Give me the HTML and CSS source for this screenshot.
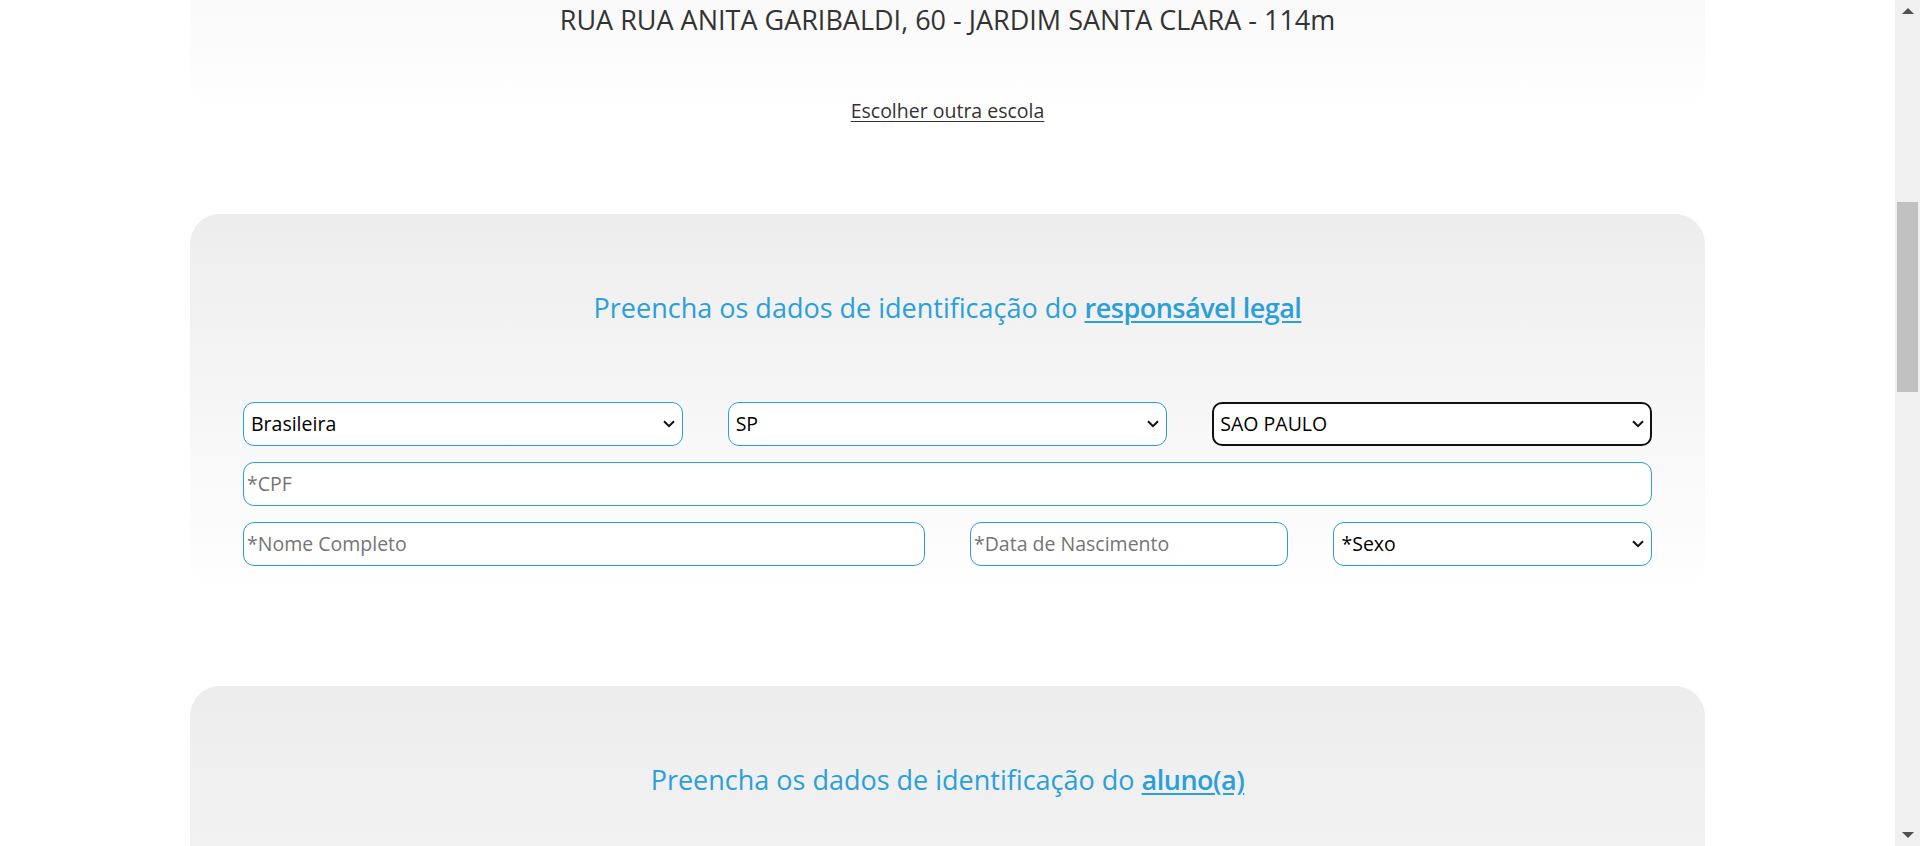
FILE: index.html
```html
<!DOCTYPE html>
<html lang="pt-BR">
<head>
<meta charset="utf-8">
<title>Matrícula</title>
<link rel="stylesheet" href="styles.css">
</head>
<body>
<div class="viewport">
  <section class="card school-card">
    <p class="address">RUA RUA ANITA GARIBALDI, 60 - JARDIM SANTA CLARA - 114m</p>
    <a class="change-link" href="#">Escolher outra escola</a>
  </section>

  <section class="card form-card">
    <h2 class="form-title">Preencha os dados de identificação do <a href="#">responsável legal</a></h2>
    <div class="grid">
      <div class="field span-4">
        <div class="control select">Brasileira</div>
        <svg class="chev" viewBox="0 0 12 8" width="12" height="8"><path d="M1 1.2 L6 6.2 L11 1.2" fill="none" stroke="#111" stroke-width="2"/></svg>
      </div>
      <div class="field span-4">
        <div class="control select">SP</div>
        <svg class="chev" viewBox="0 0 12 8" width="12" height="8"><path d="M1 1.2 L6 6.2 L11 1.2" fill="none" stroke="#111" stroke-width="2"/></svg>
      </div>
      <div class="field span-4">
        <div class="control select focused">SAO PAULO</div>
        <svg class="chev" viewBox="0 0 12 8" width="12" height="8"><path d="M1 1.2 L6 6.2 L11 1.2" fill="none" stroke="#111" stroke-width="2"/></svg>
      </div>
      <div class="field span-12">
        <div class="control input placeholder">*CPF</div>
      </div>
      <div class="field span-6">
        <div class="control input placeholder">*Nome Completo</div>
      </div>
      <div class="field span-3">
        <div class="control input placeholder">*Data de Nascimento</div>
      </div>
      <div class="field span-3">
        <div class="control select">*Sexo</div>
        <svg class="chev" viewBox="0 0 12 8" width="12" height="8"><path d="M1 1.2 L6 6.2 L11 1.2" fill="none" stroke="#111" stroke-width="2"/></svg>
      </div>
    </div>
  </section>

  <section class="card form-card student-card">
    <h2 class="form-title">Preencha os dados de identificação do <a href="#">aluno(a)</a></h2>
  </section>
</div>

<div class="scrollbar">
  <span class="arrow up"></span>
  <span class="thumb"></span>
  <span class="arrow down"></span>
</div>
</body>
</html>
```

FILE: styles.css
```css
html, body {
  margin: 0;
  padding: 0;
  height: 100%;
  overflow: hidden;
  background: #ffffff;
  font-family: "Open Sans", "Noto Sans", sans-serif;
}

.viewport {
  width: 1895px;
  display: flex;
  flex-direction: column;
  align-items: center;
}

.card {
  width: 1515px;
  box-sizing: border-box;
  border-radius: 30px;
}

.school-card {
  margin-top: -260px;
  padding-top: 260px;
  height: 372px;
  background: linear-gradient(#ececec 0%, #ffffff 100%);
  display: flex;
  flex-direction: column;
  align-items: center;
}

.address {
  margin: 2px 0 0;
  font-size: 27px;
  line-height: 36px;
  color: #333333;
}

.change-link {
  margin-top: 60px;
  font-size: 19.5px;
  line-height: 26px;
  color: #333333;
  text-decoration: underline;
  text-underline-offset: 3px;
}

.form-card {
  margin-top: 102px;
  height: 380px;
  padding: 76px 53px 0;
  background: linear-gradient(#ededed 0%, #ffffff 100%);
}

.student-card {
  margin-top: 92px;
  height: 600px;
  background: linear-gradient(#ededed 0%, #ffffff 100%);
}

.form-title {
  margin: 0;
  text-align: center;
  font-size: 27px;
  line-height: 36px;
  font-weight: 400;
  color: #2a9fd9;
}

.form-title a {
  color: #2a9fd9;
  font-weight: 600;
  letter-spacing: -0.5px;
  text-decoration: underline;
  text-underline-offset: 3px;
}

.grid {
  margin-top: 76px;
  display: grid;
  grid-template-columns: repeat(12, 1fr);
  column-gap: 45px;
  row-gap: 16px;
}

.span-3 { grid-column: span 3; }
.span-4 { grid-column: span 4; }
.span-6 { grid-column: span 6; }
.span-12 { grid-column: span 12; }

.field {
  position: relative;
}

.control {
  box-sizing: border-box;
  height: 44px;
  border: 1px solid #2a9fd9;
  border-radius: 11px;
  background: #ffffff;
  font-size: 19.5px;
  line-height: 42px;
  color: #000000;
  white-space: nowrap;
}

.select {
  padding-left: 7px;
}

.input {
  padding-left: 3px;
}

.placeholder {
  color: #757575;
}

.focused {
  border: 2px solid #111111;
  border-radius: 10px;
  line-height: 40px;
  padding-left: 6px;
}

.chev {
  position: absolute;
  right: 8px;
  top: 18px;
}

.scrollbar {
  position: fixed;
  top: 0;
  right: 0;
  width: 25px;
  height: 100%;
  background: #f0f0f0;
}

.thumb {
  position: absolute;
  left: 2px;
  right: 2px;
  top: 202px;
  height: 190px;
  background: #c1c1c1;
}

.arrow {
  position: absolute;
  left: 7px;
  width: 0;
  height: 0;
  border-left: 6px solid transparent;
  border-right: 6px solid transparent;
}

.arrow.up {
  top: 8px;
  border-bottom: 6px solid #505050;
}

.arrow.down {
  bottom: 8px;
  border-top: 6px solid #505050;
}
```
